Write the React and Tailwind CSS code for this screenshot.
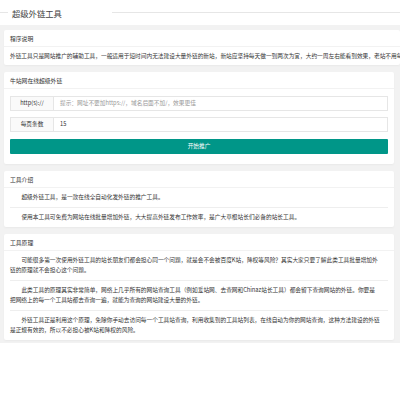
import React from 'react';

const font = { fontFamily: '"Noto Sans CJK SC", "Noto Sans", sans-serif' };

const Card = ({ title, className = '', children }) => (
  <div className={`bg-white rounded-[2px] shadow-[0_1px_2px_rgba(0,0,0,0.04)] ${className}`}>
    <div className="h-[17px] leading-[17px] px-[6px] border-b border-[#f2f2f2] text-[5.8px] text-[#333]">
      {title}
    </div>
    {children}
  </div>
);

const intro = [
  '超级外链工具，是一款在线全自动化发外链的推广工具。',
  '使用本工具可免费为网站在线批量增加外链，大大提高外链发布工作效率，是广大草根站长们必备的站长工具。',
];

const principle = [
  '可能很多第一次使用外链工具的站长朋友们都会担心同一个问题，就是会不会被百度K站，降权等风险？其实大家只要了解此类工具批量增加外链的原理就不会担心这个问题。',
  '此类工具的原理其实非常简单，网络上几乎所有的网站查询工具（例如爱站网、去查网和Chinaz站长工具）都会留下查询网站的外链。你要是把网络上的每一个工具站都去查询一遍，就能为查询的网站建设大量的外链。',
  '外链工具正是利用这个原理，免除你手动去访问每一个工具站查询，利用收集到的工具站列表，在线自动为你的网站查询，这种方法建设的外链是正规有效的，所以不必担心被K站和降权的风险。',
];

const Paras = ({ items }) => (
  <div className="px-[6px]">
    {items.map((t, i) => (
      <p
        key={i}
        className={`text-[5.7px] leading-[10px] text-[#333] indent-[2em] pr-[8px] pt-[4px] pb-[5px] ${i > 0 ? 'border-t border-[#eee]' : ''}`}
      >
        {t}
      </p>
    ))}
  </div>
);

export default function App() {
  return (
    <div className="w-[400px] h-[393px] bg-white overflow-hidden" style={font}>
      {/* legend */}
      <div className="h-[25px] pt-[8px] flex items-start">
        <div className="w-[8px] mt-[4px] border-t border-[#e6e6e6]" />
        <div className="w-[104px] pl-[4px] text-[8.3px] leading-[10px] text-[#444]">超级外链工具</div>
        <div className="flex-1 mt-[4px] border-t border-[#e6e6e6]" />
      </div>

      <div className="bg-[#f2f2f2] pt-[5px] pb-[3px] flex flex-col gap-[7px]">
        <Card title="程序说明" className="ml-[4px] mr-0 overflow-hidden">
          <div className="px-[6px] pt-[4px] pb-[4px] text-[5.7px] leading-[10px] text-[#333] whitespace-nowrap">
            外链工具只是网站推广的辅助工具，一般适用于短时间内无法建设大量外链的新站，新站应坚持每天做一到两次为宜，大约一周左右能看到效果，老站不用每天使用，一周一次即可。
          </div>
        </Card>

        <Card title="牛站网在线超级外链" className="mx-[4px] w-[390px]">
          <div className="px-[6px] pt-[7px] pb-[10px] flex flex-col gap-[6px]">
            <div className="flex h-[15px]">
              <div className="w-[44px] shrink-0 bg-[#fafafa] border border-[#e6e6e6] flex items-center justify-center text-[5.7px] text-[#333]">
                http(s)://
              </div>
              <div className="flex-1 border border-l-0 border-[#e6e6e6] flex items-center pl-[6px] text-[5.7px] text-[#999]">
                提示：网址不要加https://，域名后面不加/，效果更佳
              </div>
            </div>
            <div className="flex h-[15px]">
              <div className="w-[44px] shrink-0 bg-[#fafafa] border border-[#e6e6e6] flex items-center justify-center text-[5.7px] text-[#333]">
                每页条数
              </div>
              <div className="flex-1 border border-l-0 border-[#e6e6e6] flex items-center pl-[6px] text-[5.7px] text-[#333]">
                15
              </div>
            </div>
            <button className="mt-[1px] h-[15px] bg-[#009688] text-white text-[5.7px] rounded-[1px] flex items-center justify-center">
              开始推广
            </button>
          </div>
        </Card>

        <Card title="工具介绍" className="mx-[4px] w-[390px]">
          <Paras items={intro} />
        </Card>

        <Card title="工具原理" className="mx-[4px] w-[390px]">
          <Paras items={principle} />
        </Card>
      </div>
    </div>
  );
}
